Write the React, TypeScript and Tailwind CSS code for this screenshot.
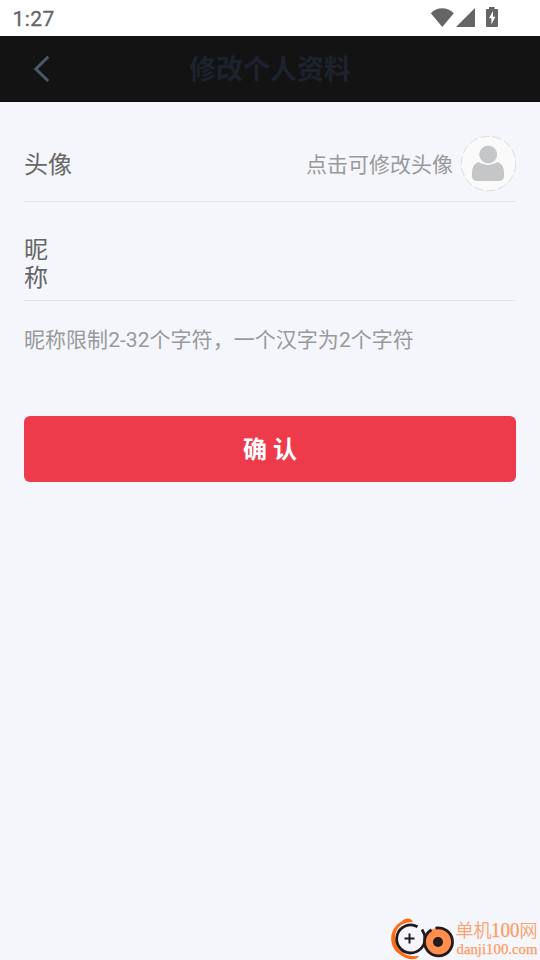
function StatusBar() {
  return (
    <div className="flex h-9 items-center justify-between bg-white pl-[12.5px] pr-[42px] text-[#656565]">
      <span className="pt-px text-[21px] leading-9 tracking-[0.4px] [-webkit-text-stroke:0.3px_#656565]">1:27</span>
      <svg width="68" height="22" viewBox="0 0 68 22" fill="currentColor" aria-hidden="true">
        <path d="M0.8 6.2C7-0.3 17.2-0.3 23.8 6.2L12.3 20Z" />
        <path d="M45 1v19H26Z" />
        <path
          fillRule="evenodd"
          d="M59 0h5.5v2H67q1 0 1 1v16q0 1-1 1H57q-1 0-1-1V3q0-1 1-1h2ZM63 4l-4 7.2h2.4v6.3l4-7.7H63Z"
        />
      </svg>
    </div>
  );
}

function Header() {
  return (
    <header className="grid h-[66px] grid-cols-[84px_1fr_84px] items-center bg-[#131313] shadow-[inset_0_-1px_0_#0e080d]">
      <button aria-label="返回" className="flex h-full items-center pl-[33px]">
        <svg width="18" height="28" viewBox="0 0 18 28" fill="none" stroke="#4b586a" strokeWidth="3" aria-hidden="true">
          <path d="M15.2 1.7L2.9 14L15.2 26" />
        </svg>
      </button>
      <h1 className="pt-[2px] text-center text-[27px] font-bold leading-[40px] text-[#1d232e]">修改个人资料</h1>
    </header>
  );
}

function Avatar() {
  return (
    <svg width="56" height="56" viewBox="0 0 56 56" aria-hidden="true">
      <circle cx="28.5" cy="27.5" r="27.2" fill="#fafafa" stroke="#c6c8ca" strokeWidth="0.6" strokeDasharray="9 3" />
      <path
        d="M18 26Q23 28.5 28 28.5Q33 28.5 38 26Q44 28.5 44 37V40Q44 45 39 45H17Q12 45 12 40V37Q12 28.5 18 26Z"
        fill="#c4c6c8"
      />
      <circle cx="28.2" cy="18.5" r="9.7" fill="#c4c6c8" stroke="#fafafa" strokeWidth="1.5" />
    </svg>
  );
}

function Watermark() {
  return (
    <div className="absolute bottom-0 right-0" aria-hidden="true">
      <svg width="150" height="44" viewBox="390 916 150 44" fill="none">
        <path
          d="M413 922C411 917.5 405 917.5 402 921.5C389 927 387 947 400 954.5C406 959.5 416 961.5 419 956C412 956.5 406 956 402 952C393 945 393 931 401 925Q406 922 413 922Z"
          fill="#ff6a13"
        />
        <path
          d="M417.5 926.8A14 14 0 1 0 410 953C419 953 425 946 425 939Q425 934 422 929.5"
          stroke="#211b1d"
          strokeWidth="2.8"
        />
        <path d="M404.5 938.5h10M409.5 933.5v10" stroke="#211b1d" strokeWidth="2" />
        <circle cx="438.5" cy="942" r="14" fill="#ff8d4b" />
        <path
          d="M435.5 928.2A14 14 0 1 1 424.5 942Q424.5 934 431.5 929.8"
          stroke="#211b1d"
          strokeWidth="2.8"
        />
        <circle cx="438" cy="942" r="5" fill="#211b1d" />
        <g fill="#ff9a62" stroke="#ff9a62" strokeWidth="0.25">
          <text x="455.5" y="937" className="font-['Noto_Sans_CJK_SC',sans-serif] text-[18px] font-light">
            单机
          </text>
          <text
            x="491"
            y="937"
            textLength="28.5"
            lengthAdjust="spacingAndGlyphs"
            className="font-['Liberation_Serif',serif] text-[20px]"
          >
            100
          </text>
          <text x="519.5" y="937" className="font-['Noto_Sans_CJK_SC',sans-serif] text-[18px] font-light">
            网
          </text>
          <text
            x="456.5"
            y="954"
            textLength="81"
            lengthAdjust="spacingAndGlyphs"
            className="font-['Liberation_Serif',serif] text-[14.5px]"
          >
            danji100.com
          </text>
        </g>
      </svg>
    </div>
  );
}

export default function App() {
  return (
    <div className="relative flex h-[960px] w-[540px] flex-col overflow-hidden bg-[#f4f6fb] font-[Roboto,'Noto_Sans_CJK_SC',sans-serif]">
      <StatusBar />
      <Header />
      <main className="flex flex-col px-6">
        <section className="flex h-[100px] items-center justify-between border-b border-[#e3e5e9] pt-6">
          <span className="pt-[2px] text-2xl leading-9 text-[#666]">头像</span>
          <button className="flex items-center gap-[7px]">
            <span className="pt-[2px] text-[21px] leading-8 text-[#999]">点击可修改头像</span>
            <Avatar />
          </button>
        </section>
        <section className="h-[99px] border-b border-[#e3e5e9] pt-[34px]">
          <label className="block w-6 text-2xl leading-7 text-[#666]">昵称</label>
        </section>
        <p className="mt-[23px] text-[21px] leading-8 tracking-[0.04px] text-[#999]">
          昵称限制2-32个字符，一个汉字为2个字符
        </p>
        <button className="mt-[60px] h-[66px] rounded-md bg-[#ee3b4b] pt-[2px] text-2xl font-bold leading-9 text-white">
          确 认
        </button>
      </main>
      <Watermark />
    </div>
  );
}
